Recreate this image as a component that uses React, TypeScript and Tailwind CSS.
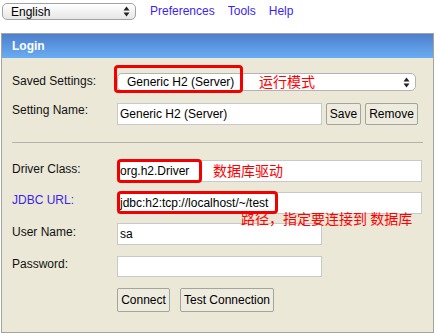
import type { ReactNode } from 'react';

const font = { fontFamily: '"Liberation Sans", Arial, sans-serif' };
const cjk = '[font-family:"Noto_Sans_CJK_SC",sans-serif]';

function UpDown() {
  return (
    <svg width="7" height="11" viewBox="0 0 7 11" className="shrink-0">
      <path d="M3.5 0.5 L6.5 4.5 L0.5 4.5 Z" fill="#222" />
      <path d="M3.5 10.5 L6.5 6.5 L0.5 6.5 Z" fill="#222" />
    </svg>
  );
}

function Label({ children, top, blue }: { children: ReactNode; top: number; blue?: boolean }) {
  return (
    <div
      className={`w-[105px] shrink-0 text-[12px] leading-[14px] ${blue ? 'text-[#3d24e6]' : 'text-[#111]'}`}
      style={{ marginTop: top }}
    >
      {children}
    </div>
  );
}

function Input({ value, wide }: { value?: string; wide?: boolean }) {
  return (
    <div
      className={`h-full ${wide ? 'w-[305px]' : 'w-[205px]'} bg-white border border-[#c9c9c9] pl-[2px] flex items-center text-[12px] text-black`}
    >
      {value}
    </div>
  );
}

function Btn({ children, w, h }: { children: ReactNode; w: string; h: string }) {
  return (
    <div
      className={`${w} ${h} flex items-center justify-center bg-[#eeebdf] border border-[#a4a39c] rounded-[2px] text-[12px] text-black`}
    >
      {children}
    </div>
  );
}

export default function App() {
  return (
    <div className="w-[437px] h-[334px] bg-white overflow-hidden" style={font}>
      {/* top bar */}
      <div className="h-[33px] pt-[3px] pl-[2px] flex items-start">
        <div className="w-[134px] h-[17px] rounded-[5px] border border-[#a2a2a2] bg-gradient-to-b from-white to-[#e6e6e6] flex items-center justify-between pl-[8px] pr-[5px] text-[12px] text-black">
          English
          <UpDown />
        </div>
        <div className="flex gap-[13px] ml-[14px] mt-[1px] text-[12px] leading-[14px] text-[#3d1ff0]">
          <span>Preferences</span>
          <span>Tools</span>
          <span>Help</span>
        </div>
      </div>

      {/* login panel */}
      <div className="ml-[1px] w-[433px] border border-[#a3a3a0]">
        <div className="h-[24px] bg-gradient-to-b from-[#4f7fcc] to-[#68adf3] flex items-center pl-[10px] text-[12px] font-bold text-white">
          Login
        </div>
        <div className="relative bg-[#ebe8d8] pl-[10px] pt-[15px] pb-[20px]">
          <div className="flex h-[18px]">
            <Label top={1}>Saved Settings:</Label>
            <div className="w-[299px] h-full rounded-[5px] border border-[#b3b3b3] bg-white flex items-center justify-between pl-[9px] pr-[5px] text-[12px] text-black">
              Generic H2 (Server)
              <UpDown />
            </div>
          </div>

          <div className="flex h-[22px] mt-[12px]">
            <Label top={0}>Setting Name:</Label>
            <Input value="Generic H2 (Server)" />
            <div className="flex gap-[4px] ml-[4px]">
              <Btn w="w-[35px]" h="h-[22px]">Save</Btn>
              <Btn w="w-[53px]" h="h-[22px]">Remove</Btn>
            </div>
          </div>

          <div className="h-px bg-[#b4b2a8] mt-[17px] mr-[10px]" />

          <div className="flex h-[22px] mt-[17px]">
            <Label top={2}>Driver Class:</Label>
            <Input value="org.h2.Driver" wide />
          </div>

          <div className="flex h-[22px] mt-[10px]">
            <Label top={1} blue>JDBC URL:</Label>
            <Input value="jdbc:h2:tcp://localhost/~/test" wide />
          </div>

          <div className="flex h-[22px] mt-[9px]">
            <Label top={2}>User Name:</Label>
            <Input value="sa" />
          </div>

          <div className="flex h-[21px] mt-[11px]">
            <Label top={1}>Password:</Label>
            <Input />
          </div>

          <div className="flex gap-[10px] ml-[105px] mt-[11px]">
            <Btn w="w-[53px]" h="h-[24px]">Connect</Btn>
            <Btn w="w-[94px]" h="h-[24px]">Test Connection</Btn>
          </div>

          {/* red annotations */}
          <div className="absolute left-[112px] top-[7px] w-[129px] h-[28px] border-[3px] border-[#f20000] rounded-[4px]" />
          <div className={`absolute left-[257px] top-[14px] text-[14px] leading-[18px] text-[#ff0000] ${cjk}`}>运行模式</div>
          <div className="absolute left-[115px] top-[101px] w-[85px] h-[24px] border-[3px] border-[#f20000] rounded-[4px]" />
          <div className={`absolute left-[211px] top-[103px] text-[14px] leading-[18px] text-[#ff0000] ${cjk}`}>数据库驱动</div>
          <div className="absolute left-[115px] top-[133px] w-[161px] h-[23px] border-[3px] border-[#f20000] rounded-[4px]" />
          <div className={`absolute left-[239px] top-[151px] text-[14px] leading-[18px] text-[#ff0000] whitespace-pre ${cjk}`}>路径，指定要连接到 数据库</div>
        </div>
      </div>
    </div>
  );
}
